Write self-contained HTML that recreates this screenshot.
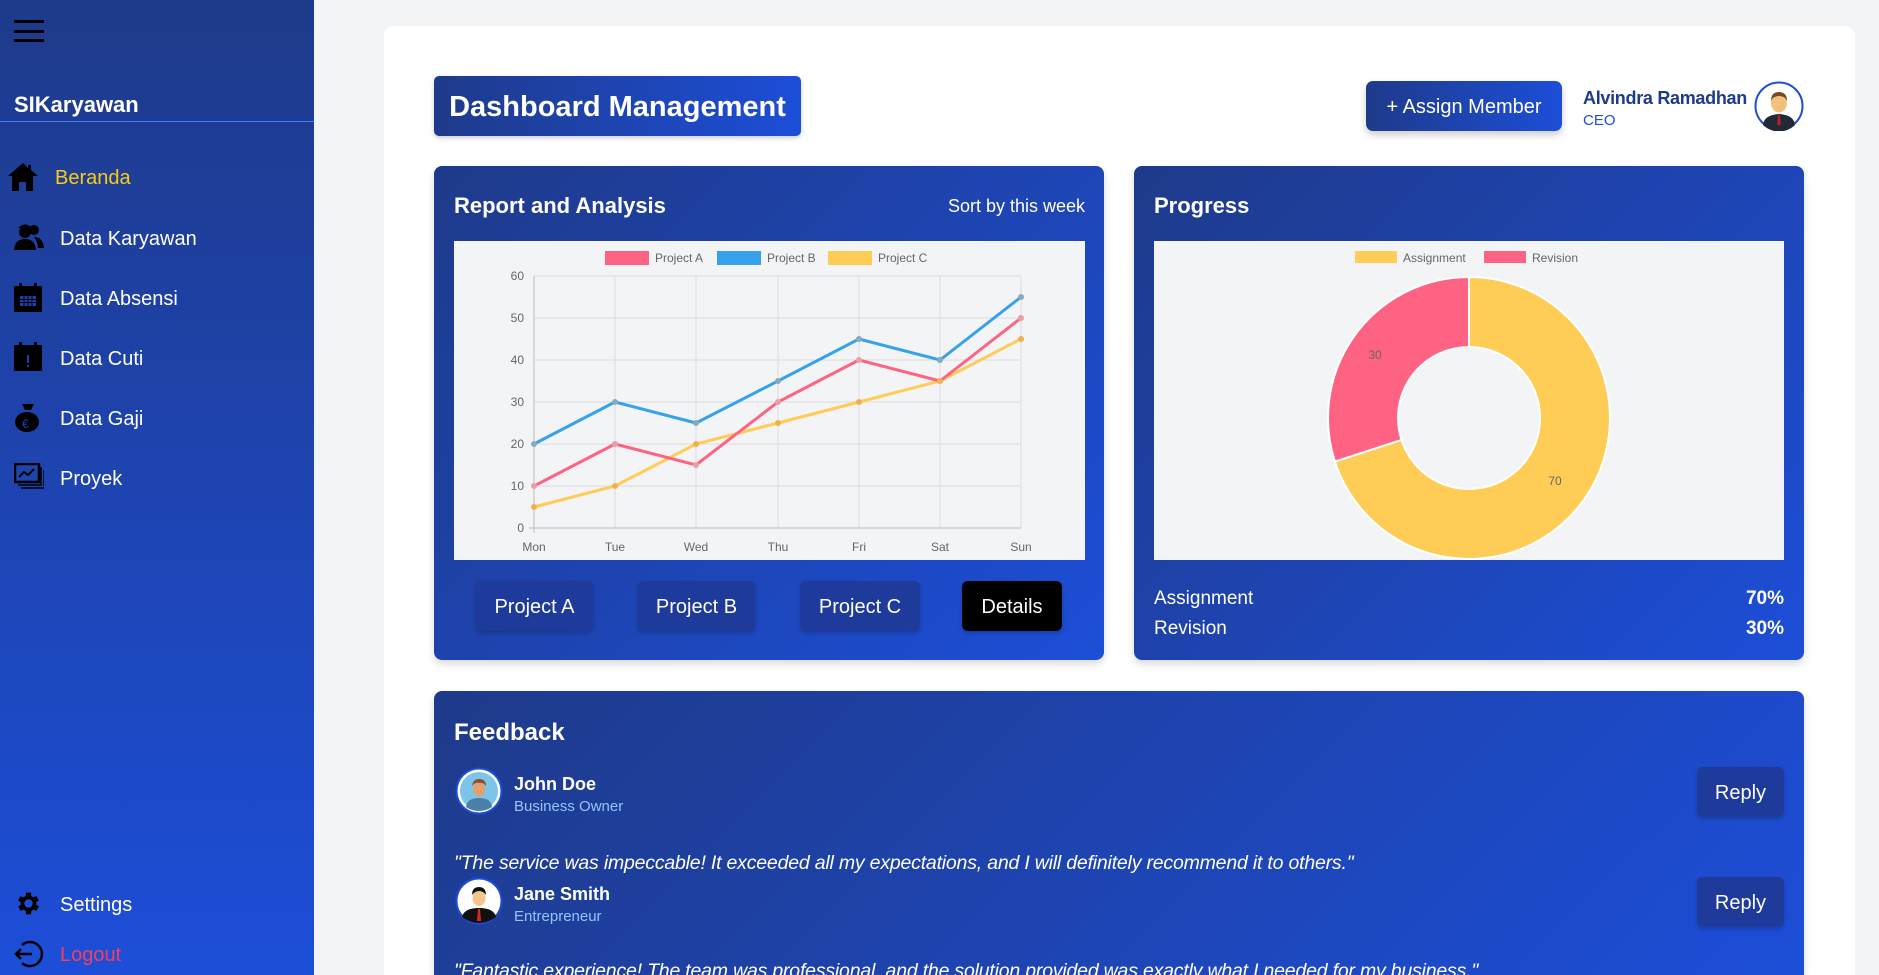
<!DOCTYPE html>
<html style="overflow:hidden;height:975px"><head><meta charset="utf-8"><style>
*{box-sizing:border-box;margin:0;padding:0}
body{width:1879px;height:975px;overflow:hidden;background:#f3f4f6;font-family:"Liberation Sans",sans-serif;position:relative}
.sb{position:absolute;left:0;top:0;width:314px;height:975px;background:linear-gradient(180deg,#1e3a8a 0%,#1d4ed8 100%)}
.abs{position:absolute}
.nav{position:absolute;left:60px;color:#fff;font-size:20px}
.ic{position:absolute;left:14px}
.card{position:absolute;border-radius:8px;background:linear-gradient(135deg,#1e3a8a,#1d4ed8);box-shadow:0 4px 8px rgba(0,0,0,.15)}
.btn{position:absolute;top:581px;height:50px;border-radius:6px;background:#1e3a9a;color:#fff;font-size:20px;display:flex;align-items:center;justify-content:center;box-shadow:0 2px 4px rgba(0,0,0,.2)}
.w{color:#fff}
</style></head><body>
<div class="sb">
 <div class="abs" style="left:14px;top:20px;width:30px;height:3px;background:#000"></div>
 <div class="abs" style="left:14px;top:30px;width:30px;height:3px;background:#000"></div>
 <div class="abs" style="left:14px;top:39px;width:30px;height:3px;background:#000"></div>
 <div class="abs w" style="left:14px;top:92px;font-size:22px;font-weight:bold">SIKaryawan</div>
 <div class="abs" style="left:0;top:121px;width:314px;height:1px;background:#3b82f6"></div>
 <svg class="ic" style="left:7px;top:161px" width="32" height="32" viewBox="0 0 32 32"><path d="M16 2 L1 15 L5 15 L5 30 L12 30 L12 21 L19 21 L19 30 L26 30 L26 15 L31 15 L24 9 L24 4 L21 4 L21 7Z" fill="#000"/></svg>
 <div class="nav" style="left:55px;top:167px;color:#facc15">Beranda</div>
 <svg class="ic" style="top:222px" width="30" height="28" viewBox="0 0 30 28"><circle cx="11" cy="10" r="6" fill="#000"/><path d="M4 6 Q11 -1 18 6Z" fill="#000"/><path d="M0 28 Q1 17 11 17 Q21 17 22 28Z" fill="#000"/><circle cx="20" cy="8" r="5" fill="#000"/><path d="M20 15 Q29 15 30 26 L24 26 Q23 18 20 15Z" fill="#000"/></svg>
 <div class="nav" style="top:228px">Data Karyawan</div>
 <svg class="ic" style="top:283px" width="29" height="29" viewBox="0 0 29 29"><rect x="0" y="3" width="28" height="26" rx="1" fill="#000"/><rect x="5" y="0" width="3" height="6" fill="#000"/><rect x="20" y="0" width="3" height="6" fill="#000"/><g fill="#1e40af"><rect x="6" y="13" width="16" height="10"/></g><g stroke="#000" stroke-width="1"><path d="M6 16.5H22M6 19.5H22M10 13V23M14 13V23M18 13V23"/></g></svg>
 <div class="nav" style="top:288px">Data Absensi</div>
 <svg class="ic" style="top:342px" width="29" height="29" viewBox="0 0 29 29"><rect x="0" y="3" width="28" height="26" rx="1" fill="#000"/><rect x="5" y="0" width="3" height="6" fill="#000"/><rect x="20" y="0" width="3" height="6" fill="#000"/><rect x="13" y="13" width="2" height="8" fill="#1e40af"/><rect x="13" y="23" width="2" height="2" fill="#1e40af"/></svg>
 <div class="nav" style="top:348px">Data Cuti</div>
 <svg class="ic" style="top:402px" width="28" height="30" viewBox="0 0 28 30"><path d="M8 2 L20 2 L17 8 L11 8Z" fill="#000"/><ellipse cx="13" cy="20" rx="12" ry="10" fill="#000"/><text x="8" y="26" font-size="12" fill="#1e40af" font-family="Liberation Sans">€</text></svg>
 <div class="nav" style="top:408px">Data Gaji</div>
 <svg class="ic" style="top:463px" width="30" height="26" viewBox="0 0 30 26"><rect x="1" y="1" width="24" height="18" fill="none" stroke="#000" stroke-width="2.5"/><path d="M4 22H27V4M7 25H30V7" fill="none" stroke="#000" stroke-width="1.5"/><path d="M5 14 L10 9 L14 12 L20 6" stroke="#000" stroke-width="2" fill="none"/></svg>
 <div class="nav" style="top:468px">Proyek</div>
 <svg class="ic" style="top:889px" width="29" height="29" viewBox="0 0 24 24"><path fill="#000" d="M19.4 13a7.5 7.5 0 000-2l2.1-1.6-2-3.5-2.5 1a7.5 7.5 0 00-1.7-1L15 3h-4l-.4 2.9a7.5 7.5 0 00-1.7 1l-2.5-1-2 3.5L6.6 11a7.5 7.5 0 000 2l-2.1 1.6 2 3.5 2.5-1a7.5 7.5 0 001.7 1L11 21h4l.4-2.9a7.5 7.5 0 001.7-1l2.5 1 2-3.5zM13 15.5a3.5 3.5 0 110-7 3.5 3.5 0 010 7z" transform="translate(-1 0)"/></svg>
 <div class="nav" style="top:894px">Settings</div>
 <svg class="ic" style="top:939px" width="30" height="30" viewBox="0 0 30 30"><path d="M8 6 A12 12 0 1 1 8 24" fill="none" stroke="#000" stroke-width="2.5"/><path d="M2 15H18M7 10L2 15L7 20" fill="none" stroke="#000" stroke-width="2.5"/></svg>
 <div class="nav" style="top:944px;color:#f43f5e">Logout</div>
</div>

<div class="abs" style="left:384px;top:26px;width:1471px;height:949px;background:#fff;border-radius:10px 10px 0 0"></div>
<div class="abs w" style="left:434px;top:76px;width:367px;height:60px;border-radius:5px;background:linear-gradient(90deg,#1e3a8a,#1d4ed8);font-size:29px;font-weight:bold;display:flex;align-items:center;justify-content:center;padding-top:3px;box-shadow:0 2px 5px rgba(0,0,0,.2)">Dashboard Management</div>
<div class="abs w" style="left:1366px;top:81px;width:196px;height:50px;border-radius:7px;background:linear-gradient(90deg,#1e3a8a,#1d4ed8);font-size:20px;display:flex;align-items:center;justify-content:center;padding-top:3px;box-shadow:0 4px 8px rgba(0,0,0,.2)">+ Assign Member</div>
<div class="abs" style="left:1583px;top:88px;font-size:18px;font-weight:bold;color:#1e3a8a;letter-spacing:-0.3px">Alvindra Ramadhan</div>
<div class="abs" style="left:1583px;top:112px;font-size:15px;color:#1d4ed8">CEO</div>
<svg class="abs" style="left:1754px;top:81px" width="50" height="50" viewBox="0 0 50 50"><circle cx="25" cy="25" r="23.5" fill="#fff" stroke="#1d4ed8" stroke-width="2"/><path d="M9 44 Q10 34 25 33 Q40 34 41 44 A23 23 0 0 1 9 44Z" fill="#1f2937"/><path d="M24 34h2l1 10h-4z" fill="#b91c1c"/><ellipse cx="25" cy="22" rx="8" ry="9.5" fill="#f0c27b"/><path d="M17 20 Q17 11 25 11 Q33 11 33 20 Q31 15 25 15 Q19 15 17 20Z" fill="#7c4a1e"/></svg>

<div class="card" style="left:434px;top:166px;width:670px;height:494px"></div>
<div class="abs w" style="left:454px;top:193px;font-size:22px;font-weight:bold">Report and Analysis</div>
<div class="abs w" style="left:900px;top:196px;width:185px;text-align:right;font-size:18px">Sort by this week</div>
<svg class="abs" style="left:454px;top:241px;background:#f3f4f6" width="631" height="319" viewBox="0 0 631 319" font-family="Liberation Sans" font-size="12" fill="#666">
 <g stroke="#ddd" stroke-width="1">
  <path d="M80 35H567M80 77H567M80 119H567M80 161H567M80 203H567M80 245H567"/>
  <path d="M161 35V287M242 35V287M324 35V287M405 35V287M486 35V287M567 35V287"/>
 </g>
 <path d="M80 35V292M75 287H567" stroke="#bbb"/>
 <g text-anchor="end"><text x="70" y="39">60</text><text x="70" y="81">50</text><text x="70" y="123">40</text><text x="70" y="165">30</text><text x="70" y="207">20</text><text x="70" y="249">10</text><text x="70" y="291">0</text></g>
 <g text-anchor="middle"><text x="80" y="310">Mon</text><text x="161" y="310">Tue</text><text x="242" y="310">Wed</text><text x="324" y="310">Thu</text><text x="405" y="310">Fri</text><text x="486" y="310">Sat</text><text x="567" y="310">Sun</text></g>
 <rect x="151" y="10" width="44" height="14" fill="#ff6384"/><text x="201" y="21">Project A</text>
 <rect x="263" y="10" width="44" height="14" fill="#36a2eb"/><text x="313" y="21">Project B</text>
 <rect x="374" y="10" width="44" height="14" fill="#ffcd56"/><text x="424" y="21">Project C</text>
 <polyline points="80,266 161,245 242,203 324,182 405,161 486,140 567,98" fill="none" stroke="#ffcd56" stroke-width="3"/>
 <polyline points="80,245 161,203 242,224 324,161 405,119 486,140 567,77" fill="none" stroke="#ff6384" stroke-width="3"/>
 <polyline points="80,203 161,161 242,182 324,140 405,98 486,119 567,56" fill="none" stroke="#36a2eb" stroke-width="3"/>
 <g fill="#e8a0a8"><circle cx="80" cy="245" r="3"/><circle cx="161" cy="203" r="3"/><circle cx="242" cy="224" r="3"/><circle cx="324" cy="161" r="3"/><circle cx="405" cy="119" r="3"/><circle cx="486" cy="140" r="3"/><circle cx="567" cy="77" r="3"/></g>
 <g fill="#8ab"><circle cx="80" cy="203" r="3"/><circle cx="161" cy="161" r="3"/><circle cx="242" cy="182" r="3"/><circle cx="324" cy="140" r="3"/><circle cx="405" cy="98" r="3"/><circle cx="486" cy="119" r="3"/><circle cx="567" cy="56" r="3"/></g>
 <g fill="#f0b050"><circle cx="80" cy="266" r="3"/><circle cx="161" cy="245" r="3"/><circle cx="242" cy="203" r="3"/><circle cx="324" cy="182" r="3"/><circle cx="405" cy="161" r="3"/><circle cx="486" cy="140" r="3"/><circle cx="567" cy="98" r="3"/></g>
</svg>
<div class="btn" style="left:476px;width:117px;padding-top:3px">Project A</div>
<div class="btn" style="left:638px;width:117px;padding-top:3px">Project B</div>
<div class="btn" style="left:800px;width:120px;padding-top:3px">Project C</div>
<div class="btn" style="left:962px;width:100px;background:#000;padding-top:3px">Details</div>

<div class="card" style="left:1134px;top:166px;width:670px;height:494px"></div>
<div class="abs w" style="left:1154px;top:193px;font-size:22px;font-weight:bold">Progress</div>
<svg class="abs" style="left:1154px;top:241px;background:#f3f4f6" width="630" height="319" viewBox="0 0 630 319" font-family="Liberation Sans" font-size="12" fill="#666">
 <rect x="201" y="10" width="42" height="12" fill="#ffcd56"/><text x="249" y="21">Assignment</text>
 <rect x="330" y="10" width="42" height="12" fill="#ff6384"/><text x="378" y="21">Revision</text>
 <path d="M315 36 A141 141 0 1 1 180.9 220.6 L247.5 198.9 A71 71 0 1 0 315 106Z" fill="#ffcd56" stroke="#fff" stroke-width="2"/>
 <path d="M180.9 220.6 A141 141 0 0 1 315 36 L315 106 A71 71 0 0 0 247.5 198.9Z" fill="#ff6384" stroke="#fff" stroke-width="2"/>
 <text x="221" y="118" text-anchor="middle">30</text>
 <text x="401" y="244" text-anchor="middle">70</text>
</svg>
<div class="abs w" style="left:1154px;top:588px;font-size:19px">Assignment</div>
<div class="abs w" style="left:1154px;top:618px;font-size:19px">Revision</div>
<div class="abs w" style="left:1700px;top:588px;width:84px;text-align:right;font-size:19px;font-weight:bold">70%</div>
<div class="abs w" style="left:1700px;top:618px;width:84px;text-align:right;font-size:19px;font-weight:bold">30%</div>

<div class="card" style="left:434px;top:691px;width:1370px;height:284px;border-radius:8px 8px 0 0"></div>
<div class="abs w" style="left:454px;top:719px;font-size:24px;font-weight:bold">Feedback</div>
<svg class="abs" style="left:455px;top:767px" width="48" height="48" viewBox="0 0 48 48"><circle cx="24" cy="24" r="22.5" fill="#fff" stroke="#1d4ed8" stroke-width="2"/><circle cx="24" cy="24" r="19" fill="#7cc4e8"/><path d="M11 40 Q12 31 24 31 Q36 31 37 40 Q31 44 24 44 Q17 44 11 40Z" fill="#4a7fa8"/><ellipse cx="24" cy="22" rx="6" ry="7.5" fill="#e0a070"/><path d="M17 19 Q18 12 24 12 Q31 12 31 19 Q28 15 24 16 Q20 15 17 19Z" fill="#8a5030"/></svg>
<div class="abs w" style="left:514px;top:774px;font-size:18px;font-weight:bold">John Doe</div>
<div class="abs" style="left:514px;top:798px;font-size:15px;color:#93c5fd">Business Owner</div>
<div class="abs w" style="left:1697px;top:767px;width:87px;height:50px;border-radius:6px;background:#1e3a9a;font-size:20px;display:flex;align-items:center;justify-content:center;padding-top:3px;box-shadow:0 2px 4px rgba(0,0,0,.2)">Reply</div>
<div class="abs w" style="left:454px;top:852px;font-size:19.5px;font-style:italic;letter-spacing:-0.2px">"The service was impeccable! It exceeded all my expectations, and I will definitely recommend it to others."</div>
<svg class="abs" style="left:455px;top:877px" width="48" height="48" viewBox="0 0 48 48"><circle cx="24" cy="24" r="22.5" fill="#fff" stroke="#1d4ed8" stroke-width="2"/><path d="M7 40 Q9 31 24 31 Q39 31 41 40 Q33 46 24 46 Q15 46 7 40Z" fill="#111"/><path d="M23 32h2l1 12h-4z" fill="#dc2626"/><ellipse cx="24" cy="21" rx="6.5" ry="8" fill="#f4c48a"/><path d="M17 18 Q17 10 24 10 Q31 10 31 18 Q28 14 24 14 Q20 14 17 18Z" fill="#111"/></svg>
<div class="abs w" style="left:514px;top:884px;font-size:18px;font-weight:bold">Jane Smith</div>
<div class="abs" style="left:514px;top:908px;font-size:15px;color:#93c5fd">Entrepreneur</div>
<div class="abs w" style="left:1697px;top:877px;width:87px;height:50px;border-radius:6px;background:#1e3a9a;font-size:20px;display:flex;align-items:center;justify-content:center;padding-top:3px;box-shadow:0 2px 4px rgba(0,0,0,.2)">Reply</div>
<div class="abs w" style="left:454px;top:960px;font-size:19.5px;font-style:italic;letter-spacing:-0.2px">"Fantastic experience! The team was professional, and the solution provided was exactly what I needed for my business."</div>
</body></html>
